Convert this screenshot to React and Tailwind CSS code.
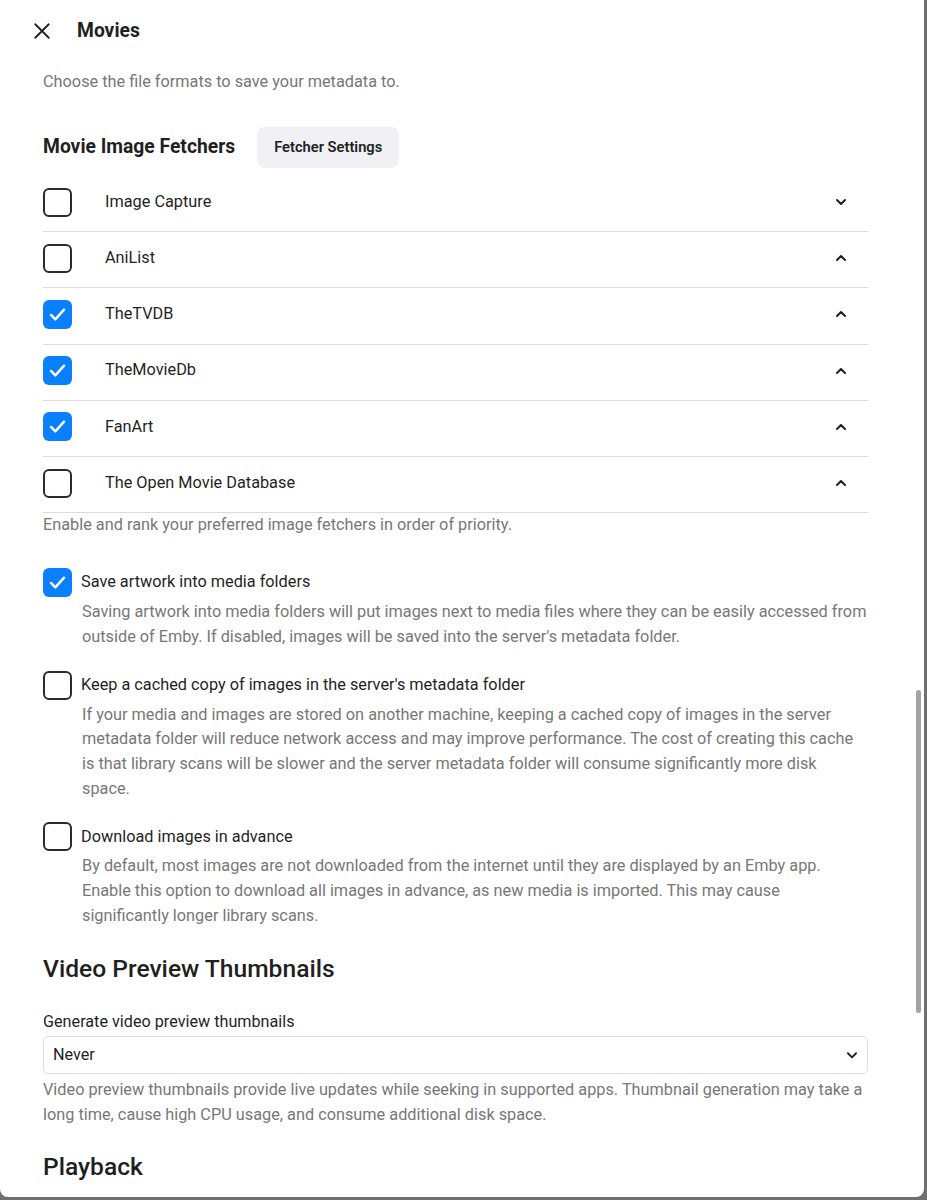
import React from "react";

const Chevron = ({ up }) => (
  <svg width="16" height="16" viewBox="0 0 24 24" fill="none" stroke="#1f1f1f" strokeWidth="3" strokeLinecap="round" strokeLinejoin="round">
    {up ? <path d="M6 15l6-6 6 6" /> : <path d="M6 9l6 6 6-6" />}
  </svg>
);

const Box = ({ checked }) =>
  checked ? (
    <div className="w-[29px] h-[29px] rounded-[6px] bg-[#0a80ff] flex items-center justify-center shrink-0">
      <svg width="21" height="21" viewBox="0 0 24 24" fill="none" stroke="white" strokeWidth="2.8" strokeLinecap="round" strokeLinejoin="round">
        <path d="M4.5 12.5l5 5L19.5 6.5" />
      </svg>
    </div>
  ) : (
    <div className="w-[29px] h-[29px] rounded-[6px] border-2 border-[#2b2b2b] shrink-0" />
  );

const fetchers = [
  { name: "Image Capture", checked: false, up: false },
  { name: "AniList", checked: false, up: true },
  { name: "TheTVDB", checked: true, up: true },
  { name: "TheMovieDb", checked: true, up: true },
  { name: "FanArt", checked: true, up: true },
  { name: "The Open Movie Database", checked: false, up: true },
];

const options = [
  {
    label: "Save artwork into media folders",
    checked: true,
    desc: "Saving artwork into media folders will put images next to media files where they can be easily accessed from outside of Emby. If disabled, images will be saved into the server's metadata folder.",
  },
  {
    label: "Keep a cached copy of images in the server's metadata folder",
    checked: false,
    desc: "If your media and images are stored on another machine, keeping a cached copy of images in the server metadata folder will reduce network access and may improve performance. The cost of creating this cache is that library scans will be slower and the server metadata folder will consume significantly more disk space.",
  },
  {
    label: "Download images in advance",
    checked: false,
    desc: "By default, most images are not downloaded from the internet until they are displayed by an Emby app. Enable this option to download all images in advance, as new media is imported. This may cause significantly longer library scans.",
  },
];

export default function App() {
  return (
    <div className="w-[927px] h-[1200px] bg-[#6f6f6f] overflow-hidden" style={{ fontFamily: "Roboto, 'Liberation Sans', sans-serif" }}>
      <div className="relative w-[924px] h-[1197px] bg-white rounded-b-[8px] overflow-hidden text-[#1f1f1f]">
        <div className="absolute left-[916px] top-[690px] w-[5px] h-[323px] rounded-full bg-[#a3a3a3]" />

        <div className="h-[62px] flex items-center pl-[33px]">
          <svg width="18" height="18" viewBox="0 0 24 24" fill="none" stroke="#1f1f1f" strokeWidth="2.4" strokeLinecap="round">
            <path d="M3 3l18 18M21 3L3 21" />
          </svg>
          <span className="ml-[26px] text-[19.3px] font-bold">Movies</span>
        </div>

        <div className="pl-[43px] pr-[56px]">
          <p className="mt-[10px] text-[16.3px] leading-[20px] text-[#777]">Choose the file formats to save your metadata to.</p>

          <div className="mt-[35px] flex items-center h-[41px]">
            <h2 className="text-[19.3px] font-bold">Movie Image Fetchers</h2>
            <button className="ml-[22px] h-[41px] px-[17px] rounded-[8px] bg-[#f1f1f5] text-[14.7px] font-semibold text-[#222]">Fetcher Settings</button>
          </div>

          <div className="mt-[8px]">
            {fetchers.map((f) => (
              <div key={f.name} className="h-[56.2px] flex items-center border-b border-[#dcdcdc] pb-[3px]">
                <Box checked={f.checked} />
                <span className="ml-[33px] text-[16.3px] flex-1">{f.name}</span>
                <span className="mr-[19px]"><Chevron up={f.up} /></span>
              </div>
            ))}
          </div>

          <p className="mt-[2px] text-[16.3px] leading-[20px] text-[#777]">Enable and rank your preferred image fetchers in order of priority.</p>

          <div className="mt-[33px] flex flex-col gap-[21px]">
            {options.map((o) => (
              <div key={o.label}>
                <div className="flex items-center">
                  <Box checked={o.checked} />
                  <span className="ml-[9px] text-[16.3px]">{o.label}</span>
                </div>
                <p className="mt-[3px] ml-[39px] text-[16.3px] leading-[24.7px] text-[#777]">{o.desc}</p>
              </div>
            ))}
          </div>

          <h2 className="mt-[26px] text-[24.6px] leading-[30px] font-medium">Video Preview Thumbnails</h2>

          <div className="mt-[28px] text-[16.2px] leading-[20px]">Generate video preview thumbnails</div>
          <div className="mt-[4px] h-[38px] border border-[#dedede] rounded-[5px] flex items-center justify-between pl-[9px] pr-[8px]">
            <span className="text-[16.2px]">Never</span>
            <svg width="14" height="14" viewBox="0 0 24 24" fill="none" stroke="#1f1f1f" strokeWidth="3.2" strokeLinecap="round" strokeLinejoin="round">
              <path d="M5 9l7 7 7-7" />
            </svg>
          </div>
          <p className="mt-[4px] text-[16.3px] leading-[24.5px] text-[#777]">Video preview thumbnails provide live updates while seeking in supported apps. Thumbnail generation may take a long time, cause high CPU usage, and consume additional disk space.</p>

          <h2 className="mt-[25px] text-[24.6px] leading-[30px] font-medium">Playback</h2>
        </div>
      </div>
    </div>
  );
}
